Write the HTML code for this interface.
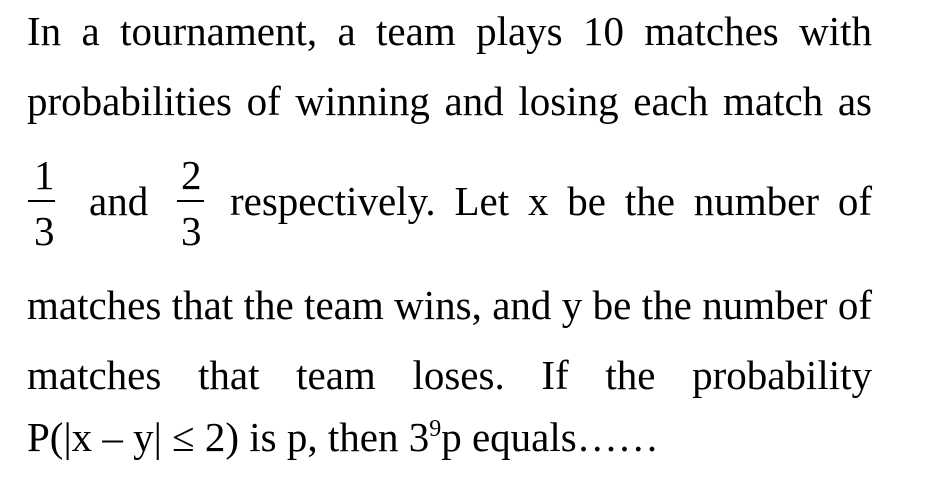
<!DOCTYPE html>
<html><head><meta charset="utf-8"><style>
body{margin:0;background:#fff;width:946px;height:482px;overflow:hidden;position:relative;font-family:"Liberation Serif",serif;font-size:41px;color:#000}
.l{position:absolute;left:27px;width:845px;line-height:40px;text-align:justify;text-align-last:justify}
.a{position:absolute;line-height:40px;white-space:nowrap}
.bar{position:absolute;height:2px;background:#000}
sup{font-size:24px;vertical-align:15px;line-height:0}
</style></head><body>
<div class="l" style="top:11px">In a tournament, a team plays 10 matches with</div>
<div class="l" style="top:81px">probabilities of winning and losing each match as</div>
<div class="a" style="left:34px;top:155px">1</div>
<div class="bar" style="left:28px;top:200px;width:27px"></div>
<div class="a" style="left:34px;top:211px">3</div>
<div class="a" style="left:89px;top:181px">and</div>
<div class="a" style="left:181px;top:155px">2</div>
<div class="bar" style="left:177px;top:200px;width:27px"></div>
<div class="a" style="left:181px;top:211px">3</div>
<div class="l" style="top:181px;left:230px;width:642px">respectively. Let x be the number of</div>
<div class="l" style="top:285px">matches that the team wins, and y be the number of</div>
<div class="l" style="top:355px">matches that team loses. If the probability</div>
<div class="a" style="left:27px;top:417px">P(|x – y| ≤ 2) is p, then 3<sup>9</sup>p equals……</div>
</body></html>
